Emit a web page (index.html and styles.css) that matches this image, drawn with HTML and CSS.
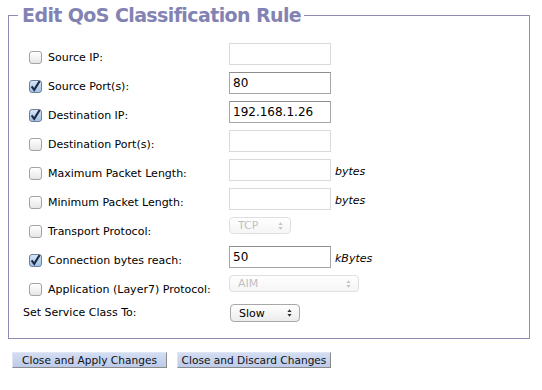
FILE: index.html
```html
<!DOCTYPE html>
<html lang="en">
<head>
  <meta charset="UTF-8" />
  <title>Edit QoS Classification Rule</title>
  <link rel="stylesheet" href="styles.css">
</head>
<body>

  <!-- Rule editor -->
  <fieldset class="rule">
    <legend>Edit QoS Classification Rule</legend>

    <div class="row">
      <label class="opt"><input type="checkbox" class="check" /> Source IP:</label>
      <input type="text" class="field" disabled />
    </div>
    <div class="row">
      <label class="opt"><input type="checkbox" class="check" checked /> Source Port(s):</label>
      <input type="text" class="field" value="80" />
    </div>
    <div class="row">
      <label class="opt"><input type="checkbox" class="check" checked /> Destination IP:</label>
      <input type="text" class="field" value="192.168.1.26" />
    </div>
    <div class="row">
      <label class="opt"><input type="checkbox" class="check" /> Destination Port(s):</label>
      <input type="text" class="field" disabled />
    </div>
    <div class="row">
      <label class="opt"><input type="checkbox" class="check" /> Maximum Packet Length:</label>
      <input type="text" class="field" disabled />
      <span class="unit">bytes</span>
    </div>
    <div class="row">
      <label class="opt"><input type="checkbox" class="check" /> Minimum Packet Length:</label>
      <input type="text" class="field" disabled />
      <span class="unit">bytes</span>
    </div>
    <div class="row">
      <label class="opt"><input type="checkbox" class="check" /> Transport Protocol:</label>
      <select class="pick pick-short" disabled><option>TCP</option><option>UDP</option></select>
    </div>
    <div class="row">
      <label class="opt"><input type="checkbox" class="check" checked /> Connection bytes reach:</label>
      <input type="text" class="field" value="50" />
      <span class="unit">kBytes</span>
    </div>
    <div class="row">
      <label class="opt"><input type="checkbox" class="check" /> Application (Layer7) Protocol:</label>
      <select class="pick pick-long" disabled><option>AIM</option></select>
    </div>
    <div class="row row-class">
      <span class="plain">Set Service Class To:</span>
      <select class="pick pick-class"><option>Slow</option><option>Normal</option><option>Fast</option></select>
    </div>
  </fieldset>

  <div class="actions">
    <button class="action action-apply">Close and Apply Changes</button>
    <button class="action action-discard">Close and Discard Changes</button>
  </div>

</body>
</html>
```

FILE: styles.css
```css
body {
  font-family: 'DejaVu Sans', Verdana, sans-serif;
  font-size: 11px;
  color: #000;
  background: #fff;
  margin: 5px 8px;
}

/* Fieldset frame */
.rule {
  box-sizing: border-box;
  width: 522px;
  margin: 0;
  padding: 13px 0 9px 0;
  border: 1px solid #8c8cb2;
}

.rule legend {
  margin-left: 9px;
  padding: 0 3px 0 4px;
  font-size: 19px;
  font-weight: bold;
  letter-spacing: -0.6px;
  line-height: 21px;
  color: #8383b3;
}

/* Rows */
.row {
  display: flex;
  align-items: flex-start;
  height: 29px;
  padding-left: 20px;
}

.opt {
  display: flex;
  align-items: center;
  width: 200px;
  height: 13px;
  margin-top: 12px;
  line-height: 13px;
}

.plain {
  display: block;
  width: 206px;
  margin-top: 6px;
  margin-left: -6px;
  line-height: 13px;
}

.check {
  appearance: none;
  -webkit-appearance: none;
  box-sizing: border-box;
  width: 13px;
  height: 13px;
  margin: 0 6px 0 0;
  border: 1px solid #a2a2a2;
  border-radius: 3px;
  background: linear-gradient(#ffffff, #e6e6e6);
}

.check:checked {
  border-color: #6d7f99;
  background:
    url("data:image/svg+xml;utf8,<svg xmlns='http://www.w3.org/2000/svg' viewBox='0 0 13 13'><path d='M2.6 6.4 L5.2 9.8 L11.6 -0.5' fill='none' stroke='%231d2a44' stroke-width='2.1'/></svg>") no-repeat center / 13px 13px,
    linear-gradient(#d7e6f7, #9fc0e6);
}

.field {
  box-sizing: border-box;
  width: 102px;
  height: 22px;
  margin: 4px 0 0 0;
  padding: 0 3px;
  font-family: 'DejaVu Sans', Verdana, sans-serif;
  font-size: 12px;
  color: #000;
  background: #fff;
  border: 1px solid #a6a6a6;
  border-top-color: #8e8e8e;
}

.field:disabled {
  border-color: #dadada;
  background: #fff;
}

.unit {
  margin: 10px 0 0 4px;
  font-style: italic;
  line-height: 13px;
}

/* Selects */
.pick {
  appearance: none;
  -webkit-appearance: none;
  box-sizing: border-box;
  height: 17px;
  margin: 4px 0 0 0;
  padding: 0 0 0 8px;
  font-family: 'DejaVu Sans', Verdana, sans-serif;
  font-size: 11px;
  color: #000;
  border: 1px solid #a8a8a8;
  border-radius: 4px;
  background:
    url("data:image/svg+xml;utf8,<svg xmlns='http://www.w3.org/2000/svg' viewBox='0 0 6 9'><path d='M3 0 L5.5 3.3 H0.5 Z M3 9 L5.5 5.7 H0.5 Z' fill='%23333'/></svg>") no-repeat right 7px center / 5px 8px,
    linear-gradient(#ffffff, #ececec);
}

.pick:disabled {
  color: #a6a6a6;
  border-color: #d2d2d2;
  background:
    url("data:image/svg+xml;utf8,<svg xmlns='http://www.w3.org/2000/svg' viewBox='0 0 6 9'><path d='M3 0 L5.5 3.3 H0.5 Z M3 9 L5.5 5.7 H0.5 Z' fill='%23aaa'/></svg>") no-repeat right 7px center / 5px 8px,
    linear-gradient(#ffffff, #f2f2f2);
}

.pick-short { width: 62px; }
.pick-long { width: 130px; }
.pick-class { width: 70px; height: 18px; margin-left: 1px; }

/* Buttons */
.actions {
  display: flex;
  gap: 10px;
  margin: 13px 0 0 4px;
}

.action {
  height: 16px;
  padding: 0;
  font-family: 'DejaVu Sans', Verdana, sans-serif;
  font-size: 10.6px;
  line-height: 14px;
  text-align: center;
  color: #111;
  background: linear-gradient(#d3ddf2, #bccbea);
  border: 1px solid #dfe5f3;
  border-right-color: #8a8a8a;
  border-bottom-color: #8a8a8a;
  border-radius: 0;
}

.action-apply { width: 155px; }
.action-discard { width: 154px; }
```
